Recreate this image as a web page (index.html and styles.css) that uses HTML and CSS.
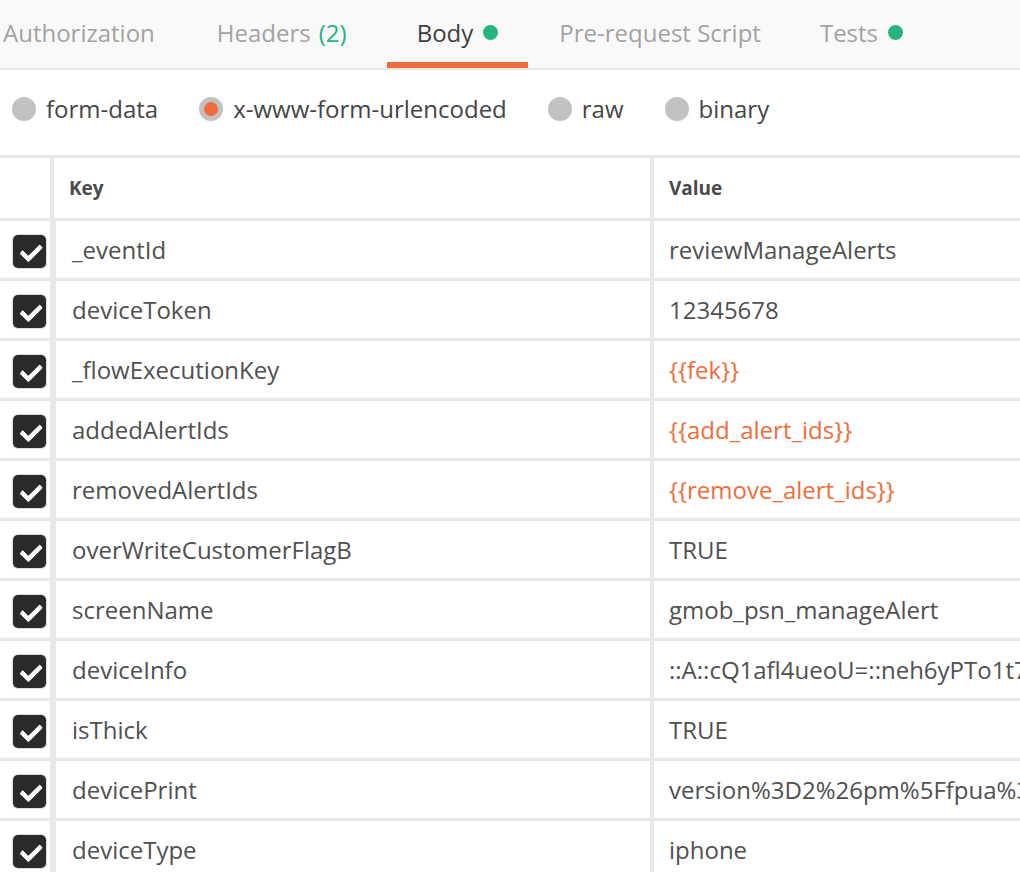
FILE: index.html
```html
<!DOCTYPE html>
<html>
<head>
<meta charset="utf-8">
<link rel="stylesheet" href="styles.css">
</head>
<body>
<div class="tabs">
  <div class="tab t-auth">Authorization</div>
  <div class="tab t-headers">Headers <span class="count">(2)</span></div>
  <div class="tab t-body active">Body <span class="dot"></span></div>
  <div class="tab t-pre">Pre-request Script</div>
  <div class="tab t-tests">Tests <span class="dot"></span></div>
</div>
<div class="modes">
  <label class="mode"><span class="radio"></span>form-data</label>
  <label class="mode"><span class="radio on"></span>x-www-form-urlencoded</label>
  <label class="mode"><span class="radio"></span>raw</label>
  <label class="mode"><span class="radio"></span>binary</label>
</div>
<div class="table">
  <div class="row head">
    <div class="c-check"></div>
    <div class="c-key">Key</div>
    <div class="c-val">Value</div>
  </div>
  <div class="row"><div class="c-check"><span class="cb"></span></div><div class="c-key">_eventId</div><div class="c-val">reviewManageAlerts</div></div>
  <div class="row"><div class="c-check"><span class="cb"></span></div><div class="c-key">deviceToken</div><div class="c-val">12345678</div></div>
  <div class="row"><div class="c-check"><span class="cb"></span></div><div class="c-key">_flowExecutionKey</div><div class="c-val var">{{fek}}</div></div>
  <div class="row"><div class="c-check"><span class="cb"></span></div><div class="c-key">addedAlertIds</div><div class="c-val var">{{add_alert_ids}}</div></div>
  <div class="row"><div class="c-check"><span class="cb"></span></div><div class="c-key">removedAlertIds</div><div class="c-val var">{{remove_alert_ids}}</div></div>
  <div class="row"><div class="c-check"><span class="cb"></span></div><div class="c-key">overWriteCustomerFlagB</div><div class="c-val">TRUE</div></div>
  <div class="row"><div class="c-check"><span class="cb"></span></div><div class="c-key">screenName</div><div class="c-val">gmob_psn_manageAlert</div></div>
  <div class="row"><div class="c-check"><span class="cb"></span></div><div class="c-key">deviceInfo</div><div class="c-val">::A::cQ1afl4ueoU=::neh6yPTo1t7Kq9</div></div>
  <div class="row"><div class="c-check"><span class="cb"></span></div><div class="c-key">isThick</div><div class="c-val">TRUE</div></div>
  <div class="row"><div class="c-check"><span class="cb"></span></div><div class="c-key">devicePrint</div><div class="c-val">version%3D2%26pm%5Ffpua%3Dmozilla</div></div>
  <div class="row"><div class="c-check"><span class="cb"></span></div><div class="c-key">deviceType</div><div class="c-val">iphone</div></div>
</div>
</body>
</html>
```
FILE: styles.css
```css
html, body {
  margin: 0;
  padding: 0;
  background: #ffffff;
  overflow: hidden;
}
body {
  font-family: "Open Sans", "Noto Sans", sans-serif;
  color: #505050;
  width: 1020px;
  height: 872px;
}
.tabs {
  display: flex;
  height: 68px;
  background: #f9f9f9;
  border-bottom: 2px solid #e6e6e6;
}
.tab {
  box-sizing: border-box;
  height: 68px;
  padding: 3px 30px 0;
  border-bottom: 6px solid transparent;
  display: flex;
  align-items: center;
  font-size: 24px;
  color: #a3a3a3;
  white-space: nowrap;
}
.t-auth { margin-left: -27px; }
.t-headers { margin-left: 2px; }
.t-body { margin-left: 10px; }
.t-pre { margin-left: 1px; }
.t-tests { margin-left: -1px; }
.tab.active {
  color: #3f3f3f;
  border-bottom-color: #f16c3a;
}
.count {
  color: #26b47f;
  margin-left: 8px;
}
.dot {
  display: inline-block;
  width: 15px;
  height: 15px;
  border-radius: 50%;
  background: #26b47f;
  margin-left: 10px;
}
.modes {
  box-sizing: border-box;
  display: flex;
  align-items: center;
  height: 85px;
  padding: 0 0 8px 12px;
  gap: 41px;
  font-size: 24px;
  color: #454545;
}
.mode {
  display: flex;
  align-items: center;
  gap: 10px;
}
.radio {
  box-sizing: border-box;
  width: 24px;
  height: 24px;
  border-radius: 50%;
  background: #c2c2c2;
  display: flex;
  align-items: center;
  justify-content: center;
}
.radio.on::after {
  content: "";
  width: 14px;
  height: 14px;
  border-radius: 50%;
  background: #f16c3a;
}
.table {
  border-top: 3px solid #e8e8e8;
}
.row {
  display: flex;
  height: 57px;
  border-bottom: 3px solid #e8e8e8;
  font-size: 24px;
}
.row.head {
  height: 60px;
  font-size: 19px;
  font-weight: 700;
  color: #4a4a4a;
}
.c-check {
  box-sizing: border-box;
  width: 56px;
  flex: none;
  display: flex;
  align-items: center;
  border-right: 6px solid #e8e8e8;
  padding-left: 13px;
}
.row.head .c-check { border-right-width: 4px; width: 54px; }
.row.head .c-key { padding-left: 15px; width: 600px; }
.c-key {
  width: 598px;
  flex: none;
  box-sizing: border-box;
  padding-left: 16px;
  display: flex;
  align-items: center;
  border-right: 4px solid #e8e8e8;
  white-space: nowrap;
}
.c-val {
  flex: 1;
  padding-left: 15px;
  display: flex;
  align-items: center;
  white-space: nowrap;
  overflow: hidden;
}
.c-val.var { color: #f16c3a; }
.cb {
  position: relative;
  display: block;
  flex: none;
  width: 33px;
  height: 33px;
  box-sizing: border-box;
  border-radius: 5px;
  background: #2a2a2a;
  box-shadow: 0 0 0 1px #dcdcdc;
  margin-top: 4px;
}
.cb::after {
  content: "";
  position: absolute;
  left: 7px;
  top: 7px;
  width: 16px;
  height: 8px;
  border-left: 5px solid #fff;
  border-bottom: 5px solid #fff;
  transform: rotate(-45deg) translate(-1px, 2px);
  border-radius: 2px;
}
```
